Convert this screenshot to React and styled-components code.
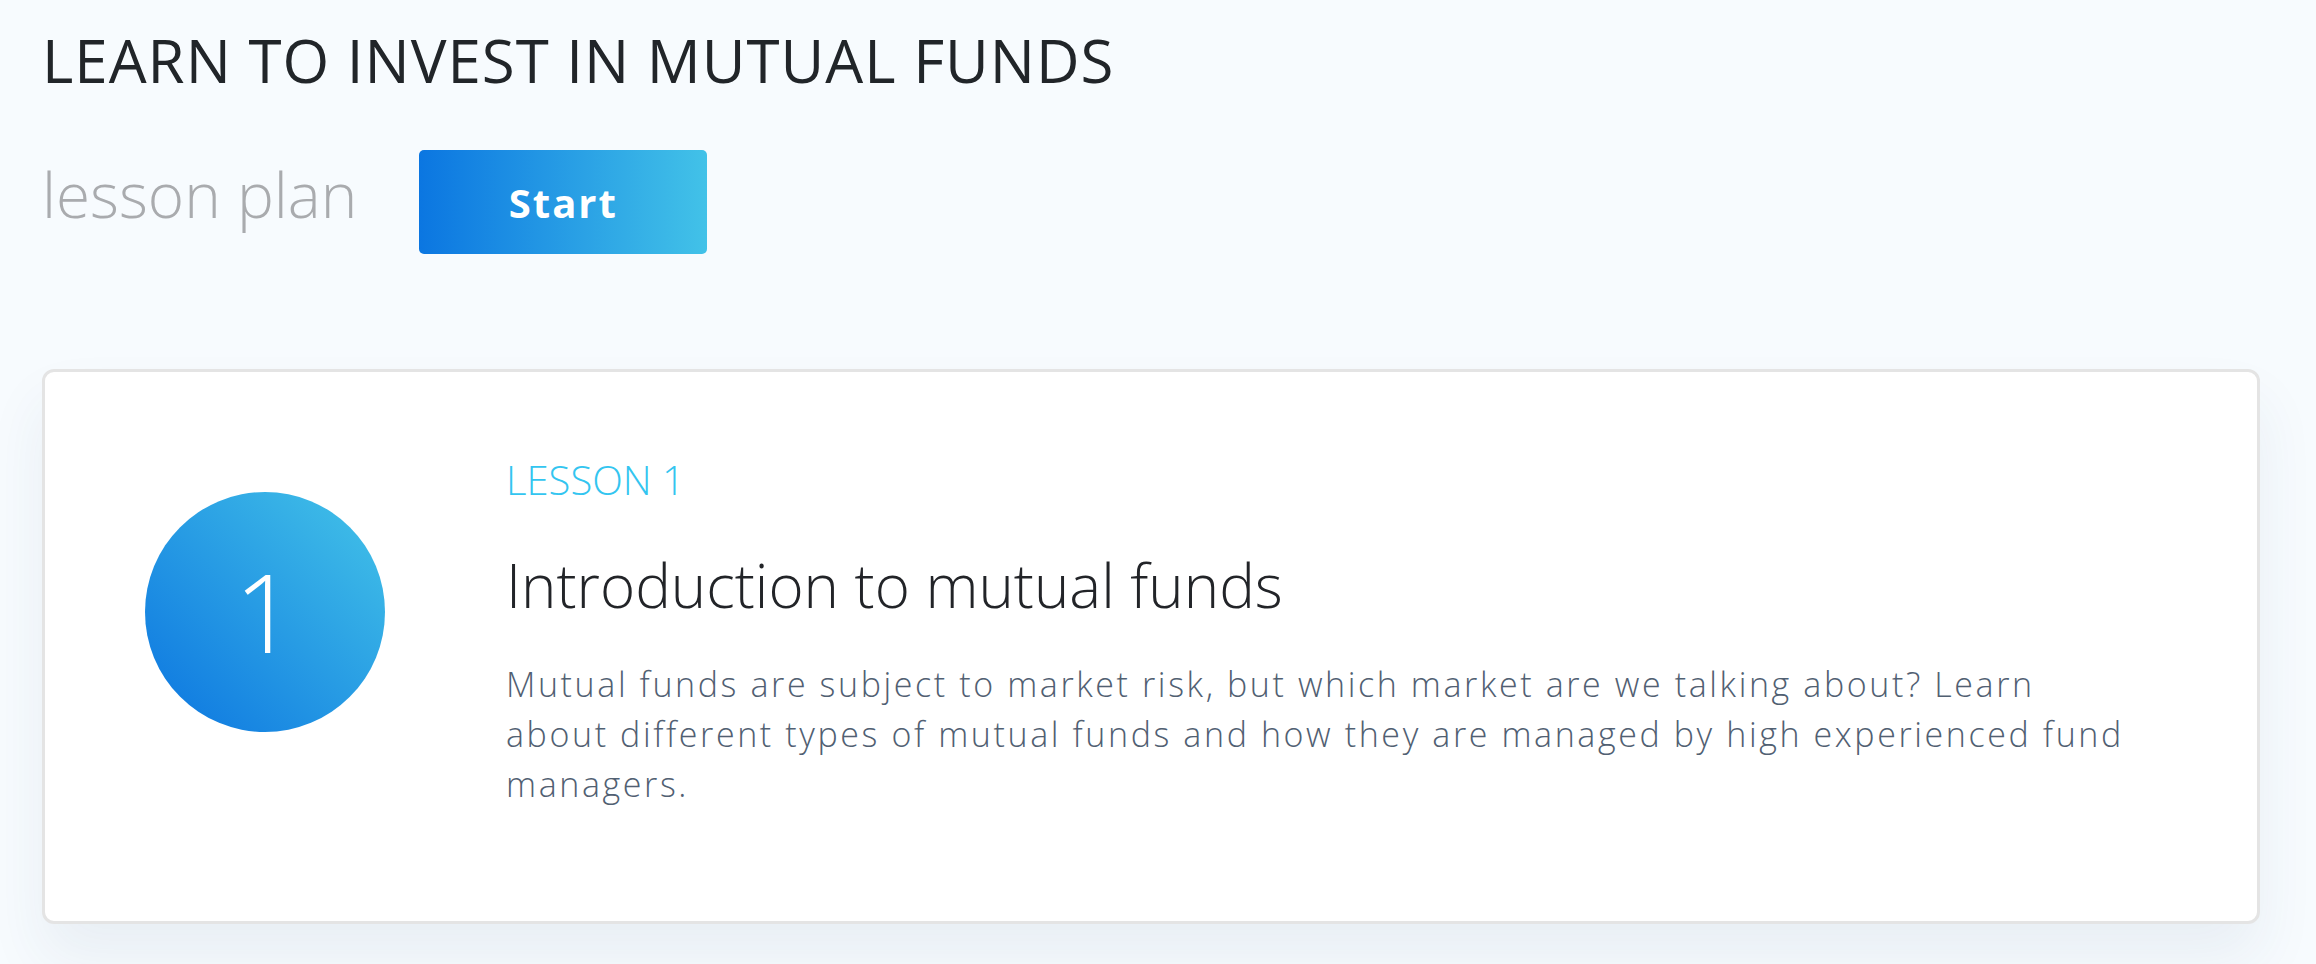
import React from 'react';
import styled, { createGlobalStyle } from 'styled-components';

const GlobalStyle = createGlobalStyle`
  html, body {
    margin: 0;
    padding: 0;
    background: #f7fbfe;
    font-family: 'Open Sans', 'Noto Sans', sans-serif;
  }
`;

const Page = styled.div`
  min-height: 100vh;
  padding: 24px 56px 0 42px;
  box-sizing: border-box;
  overflow: hidden;
`;

const Heading = styled.h1`
  margin: 0;
  font-size: 60px;
  line-height: 72px;
  font-weight: 400;
  color: #212529;
  letter-spacing: 1px;
`;

const PlanRow = styled.div`
  display: flex;
  align-items: baseline;
  gap: 62px;
  margin-top: 54px;
`;

const PlanLabel = styled.span`
  font-size: 62px;
  line-height: 72px;
  font-weight: 300;
  color: #a9abae;
`;

const StartButton = styled.button`
  width: 288px;
  height: 104px;
  border: none;
  border-radius: 5px;
  background: linear-gradient(90deg, #0b76e1 0%, #42c2e8 100%);
  color: #ffffff;
  font-family: 'Open Sans', sans-serif;
  font-size: 40px;
  font-weight: 700;
  letter-spacing: 2px;
  cursor: pointer;
`;

const Card = styled.div`
  display: flex;
  align-items: flex-start;
  margin-top: 115px;
  padding: 84px 100px 112px 100px;
  background: #ffffff;
  border: 3px solid #e4e4e4;
  border-radius: 12px;
  box-shadow: 0 34px 60px rgba(40, 70, 110, 0.07);
`;

const Badge = styled.div`
  flex: 0 0 auto;
  width: 240px;
  height: 240px;
  margin-top: 36px;
  border-radius: 50%;
  background: linear-gradient(45deg, #0b74e0 0%, #44c4e8 100%);
  display: flex;
  align-items: center;
  justify-content: center;
  color: #ffffff;
  font-size: 108px;
  font-weight: 300;
  line-height: 1;
`;

const Body = styled.div`
  margin-left: 121px;
  flex: 1;
`;

const LessonTag = styled.div`
  font-size: 40px;
  line-height: 48px;
  font-weight: 300;
  color: #33c5f0;
`;

const LessonTitle = styled.h2`
  margin: 45px 0 0;
  font-size: 60px;
  line-height: 72px;
  font-weight: 300;
  color: #222428;
`;

const LessonText = styled.p`
  margin: 38px 0 0;
  max-width: 1665px;
  font-size: 34px;
  line-height: 50px;
  font-weight: 300;
  letter-spacing: 2.6px;
  color: #516072;
  white-space: pre-line;
`;

const lesson = {
  number: 1,
  title: 'Introduction to mutual funds',
  text: 'Mutual funds are subject to market risk, but which market are we talking about? Learn\nabout different types of mutual funds and how they are managed by high experienced fund managers.',
};

export default function App() {
  return (
    <Page>
      <GlobalStyle />
      <Heading>LEARN TO INVEST IN MUTUAL FUNDS</Heading>
      <PlanRow>
        <PlanLabel>lesson plan</PlanLabel>
        <StartButton>Start</StartButton>
      </PlanRow>
      <Card>
        <Badge>{lesson.number}</Badge>
        <Body>
          <LessonTag>LESSON {lesson.number}</LessonTag>
          <LessonTitle>{lesson.title}</LessonTitle>
          <LessonText>{lesson.text}</LessonText>
        </Body>
      </Card>
    </Page>
  );
}
